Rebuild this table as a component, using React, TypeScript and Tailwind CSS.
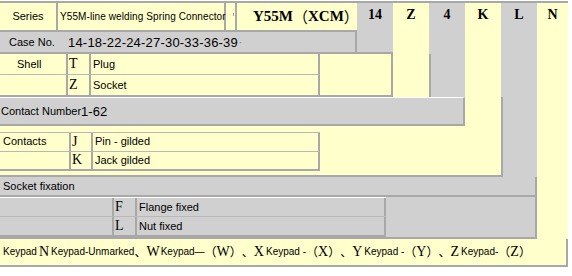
import React from "react";

const yel = "bg-[#ffffcc]";
const gry = "bg-[#d0d0d0]";

type Col = { key: string; w: string; bg: string };

const cols: Col[] = [
  { key: "14", w: "w-[36px]", bg: gry },
  { key: "Z", w: "w-[36px]", bg: yel },
  { key: "4", w: "w-[36px]", bg: gry },
  { key: "K", w: "w-[36px]", bg: yel },
  { key: "L", w: "w-[36px]", bg: gry },
  { key: "N", w: "w-[31px]", bg: yel },
];

// code columns on the right, drawn from `from` onward for one band
function Cols({ from, head = false, edge = [] }: { from: number; head?: boolean; edge?: string[] }) {
  return (
    <>
      {cols.slice(from).map((c) => (
        <div
          key={c.key}
          className={`${c.w} ${c.bg} shrink-0 flex justify-center ${
            edge.includes(c.key) ? "border-l-2 border-[#a8a8a8]" : ""
          }`}
        >
          {head && (
            <span className="pt-[5px] text-[14px] leading-[14px] font-bold font-['Liberation_Serif',serif] text-black">
              {c.key}
            </span>
          )}
        </div>
      ))}
    </>
  );
}

const sans = "leading-none text-black font-['Liberation_Sans',Arial,sans-serif] whitespace-nowrap";
const small = `text-[11px] ${sans}`;
const tiny = `text-[10px] ${sans}`;
const code = "text-[14px] leading-none text-black font-['Liberation_Serif',serif]";
const cjk = "font-['Noto_Sans_CJK_SC',sans-serif]";

function OptRow({ c1, c2, label, code: k, text, last = false, bg = yel }: {
  c1: string; c2: string; label: string; code: string; text: string; last?: boolean; bg?: string;
}) {
  return (
    <div className={`flex flex-1 ${last ? "border-b-2 border-[#a8a8a8]" : "border-b border-[#b8b8b8]"}`}>
      <div className={`${c1} ${bg} shrink-0 border-r-2 border-[#a8a8a8] flex items-center ${small}`}>{label}</div>
      <div className={`${c2} ${bg} shrink-0 border-r-2 border-[#a8a8a8] flex items-center pl-[1px] ${code}`}>{k}</div>
      <div className={`flex-1 ${bg} border-r-2 border-[#a8a8a8] flex items-center pl-[2px] ${small}`}>{text}</div>
    </div>
  );
}

function Paren({ ch }: { ch: string }) {
  return (
    <>
      <span className={`${cjk} text-[12px] leading-none`}>（</span>
      <span className="text-[14px] leading-none font-['Liberation_Serif',serif]">{ch}</span>
      <span className={`${cjk} text-[12px] leading-none`}>）</span>
    </>
  );
}

export default function App() {
  return (
    <div className="w-[572px] h-[276px] bg-white overflow-hidden">
      <div className="mt-[1px] w-[568px] border-t-2 border-[#a8a8a8] flex flex-col">
        {/* series / header row */}
        <div className="flex h-[29px]">
          <div className={`w-[357px] shrink-0 flex ${yel} border-b-2 border-[#a8a8a8]`}>
            <div className={`w-[58px] shrink-0 border-r-2 border-[#a8a8a8] flex items-center justify-center ${small}`}>Series</div>
            <div className={`w-[168px] shrink-0 border-r-2 border-[#a8a8a8] flex items-center pl-[2px] text-[10px] tracking-[0.1px] ${sans}`}>
              Y55M-line welding Spring Connector
            </div>
            <div className="w-[11px] shrink-0 border-r-2 border-[#a8a8a8] flex items-center justify-end pr-[1px]">
              <div className="w-px h-[3px] bg-[#9a9a9a] -mt-[4px]" />
            </div>
            <div className="flex-1 flex items-start pt-[6px] pl-[16px] whitespace-nowrap text-[15px] leading-none font-bold font-['Liberation_Serif',serif] text-black">
              Y55M<span className={`${cjk} font-normal`}>（</span>XCM<span className={`${cjk} font-normal`}>）</span>
            </div>
          </div>
          <Cols from={0} head />
        </div>

        {/* case sizes */}
        <div className="flex h-[22px]">
          <div className={`w-[357px] shrink-0 ${gry} border-r-2 border-b-2 border-[#a8a8a8] flex items-center`}>
            <span className={`${small} pl-[9px] w-[68px]`}>Case No.</span>
            <span className="text-[13px] leading-none text-black font-['Liberation_Sans',Arial,sans-serif] tracking-[0.2px]">
              14-18-22-24-27-30-33-36-39
            </span>
            <span className="text-[10px] text-[#888] ml-[1px]">·</span>
          </div>
          <div className={`w-[36px] shrink-0 ${gry} border-b-2 border-[#a8a8a8]`} />
          <Cols from={1} />
        </div>

        {/* shell */}
        <div className="flex h-[43px]">
          <div className="w-[393px] shrink-0 flex">
            <div className="w-[320px] shrink-0 flex flex-col">
              <OptRow c1="w-[68px] pl-[17px]" c2="w-[23px]" label="Shell" code="T" text="Plug" />
              <OptRow c1="w-[68px]" c2="w-[23px]" label="" code="Z" text="Socket" last />
            </div>
            <div className={`flex-1 ${yel} border-r-2 border-b-2 border-[#a8a8a8]`} />
          </div>
          <Cols from={1} edge={["4"]} />
        </div>

        {/* contact number */}
        <div className="flex h-[29px]">
          <div className={`w-[465px] shrink-0 ${gry} border-t border-t-white border-r-2 border-b-2 border-[#a8a8a8] flex items-center`}>
            <span className={`${small} pl-[1px]`}>Contact Number</span>
            <span className="text-[13px] leading-none text-black font-['Liberation_Sans',Arial,sans-serif]">1-62</span>
          </div>
          <Cols from={3} edge={["L"]} />
        </div>

        {/* contacts */}
        <div className="flex h-[51px]">
          <div className={`w-[501px] shrink-0 ${yel} pt-[6px] pb-[4px] border-b-2 border-[#a8a8a8]`}>
            <div className="w-[320px] h-full flex flex-col border-t border-[#b8b8b8]">
              <OptRow c1="w-[71px] pl-[3px]" c2="w-[22px]" label="Contacts" code="J" text="Pin - gilded" />
              <OptRow c1="w-[71px]" c2="w-[22px]" label="" code="K" text=" Jack gilded" last />
            </div>
          </div>
          <Cols from={4} edge={["L"]} />
        </div>

        {/* socket fixation */}
        <div className="flex h-[62px]">
          <div className={`w-[537px] shrink-0 ${gry} border-r-2 border-b-2 border-[#a8a8a8] flex flex-col`}>
            <div className={`h-[20px] shrink-0 border-b-2 border-[#a8a8a8] flex items-center pl-[3px] ${small}`}>Socket fixation</div>
            <div className="flex flex-1">
              <div className="w-[386px] shrink-0 flex flex-col border-t border-white">
                <OptRow c1="w-[114px]" c2="w-[23px]" label="" code="F" text="Flange fixed" bg={gry} />
                <OptRow c1="w-[114px]" c2="w-[23px]" label="" code="L" text="Nut fixed" bg={gry} last />
              </div>
              <div className="flex-1" />
            </div>
          </div>
          <Cols from={5} />
        </div>

        {/* keypad */}
        <div className={`h-[28px] ${yel} border-r-2 border-b-2 border-[#a8a8a8] flex items-center pl-[3px] whitespace-nowrap text-black`}>
          <span className={tiny}>Keypad</span>
          <span className={`${code} mx-[2px]`}>N</span>
          <span className={tiny}>Keypad-Unmarked</span>
          <span className={`${cjk} text-[12px] leading-none`}>、</span>
          <span className={`${code} mr-[1px]`}>W</span>
          <span className={tiny}>Keypad—</span>
          <Paren ch="W" />
          <span className={`${cjk} text-[12px] leading-none`}>、</span>
          <span className={`${code} mr-[2px]`}>X</span>
          <span className={tiny}>Keypad -</span>
          <Paren ch="X" />
          <span className={`${cjk} text-[12px] leading-none`}>、</span>
          <span className={`${code} mr-[2px]`}>Y</span>
          <span className={tiny}>Keypad -</span>
          <Paren ch="Y" />
          <span className={`${cjk} text-[12px] leading-none`}>、</span>
          <span className={`${code} mr-[2px]`}>Z</span>
          <span className={tiny}>Keypad-</span>
          <Paren ch="Z" />
        </div>
      </div>
    </div>
  );
}
